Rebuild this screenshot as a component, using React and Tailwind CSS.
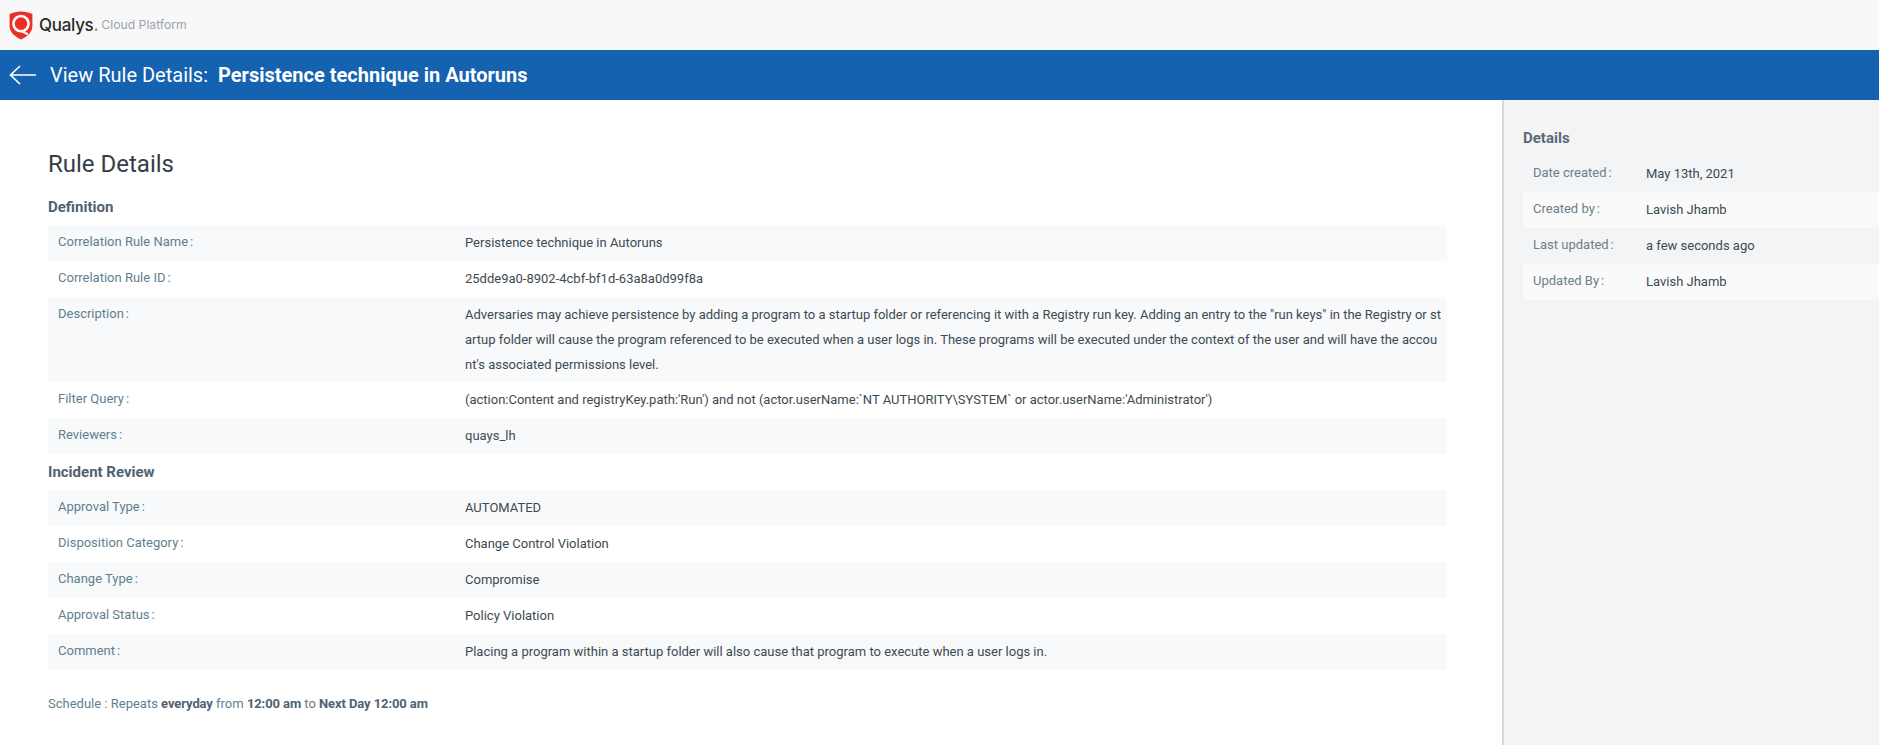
import React from "react";

const definition = [
  ["Correlation Rule Name", "Persistence technique in Autoruns"],
  ["Correlation Rule ID", "25dde9a0-8902-4cbf-bf1d-63a8a0d99f8a"],
  ["Description", "Adversaries may achieve persistence by adding a program to a startup folder or referencing it with a Registry run key. Adding an entry to the \"run keys\" in the Registry or startup folder will cause the program referenced to be executed when a user logs in. These programs will be executed under the context of the user and will have the account's associated permissions level."],
  ["Filter Query", "(action:Content and registryKey.path:'Run') and not (actor.userName:`NT AUTHORITY\\SYSTEM` or actor.userName:'Administrator')"],
  ["Reviewers", "quays_lh"],
];

const review = [
  ["Approval Type", "AUTOMATED"],
  ["Disposition Category", "Change Control Violation"],
  ["Change Type", "Compromise"],
  ["Approval Status", "Policy Violation"],
  ["Comment", "Placing a program within a startup folder will also cause that program to execute when a user logs in."],
];

const details = [
  ["Date created", "May 13th, 2021"],
  ["Created by", "Lavish Jhamb"],
  ["Last updated", "a few seconds ago"],
  ["Updated By", "Lavish Jhamb"],
];

function Logo() {
  return (
    <svg width="24" height="29" viewBox="0 0 24 29" aria-hidden="true">
      <path d="M12 0.5C8 0.5 4 1.4 0.6 3V15C0.6 21 5.5 25.5 12 28.5C18.5 25.5 23.4 21 23.4 15V3C20 1.4 16 0.5 12 0.5Z" fill="#ed2e26" />
      <circle cx="12" cy="12.6" r="7.6" fill="none" stroke="#fff" strokeWidth="2.6" />
      <circle cx="12" cy="12.6" r="3.6" fill="#ed2e26" />
      <path d="M12.5 20L18.8 23.2" stroke="#fff" strokeWidth="2.4" />
    </svg>
  );
}

function Row({ label, value }) {
  return (
    <div className="flex min-h-[36px] py-[5px] pl-[10px] odd:bg-[#f8f9fb]">
      <div className="w-[407px] shrink-0 leading-[23px] text-[#5f7f8f]">{label}<span className="ml-[2px]">:</span></div>
      <div className="min-w-0 flex-1 break-all pr-[3px] leading-[25px] text-[#3d4a52]">{value}</div>
    </div>
  );
}

function SideRow({ label, value }) {
  return (
    <div className="flex h-[36px] items-center pl-[10px] odd:bg-[#f3f4f5] even:bg-[#fafafa]">
      <div className="w-[113px] shrink-0 -translate-y-px text-[#6b7f8c]">{label}<span className="ml-[2px]">:</span></div>
      <div className="text-[#3d4a52]">{value}</div>
    </div>
  );
}

export default function App() {
  return (
    <div className="flex h-[745px] flex-col overflow-hidden bg-white font-['Roboto',sans-serif] text-[13px]">
      <header className="flex h-[50px] shrink-0 items-center bg-[#f8f8f8] pl-[9px]">
        <Logo />
        <span className="ml-[6px] font-['Inter',sans-serif] text-[17px] font-medium leading-none tracking-[-0.3px] text-[#2b2b2b]">Qualys<span className="text-[#8a8f99]">.</span></span>
        <span className="ml-[3px] font-['Inter',sans-serif] text-[12.2px] leading-none text-[#9aa3b2]">Cloud Platform</span>
      </header>
      <div className="flex h-[50px] shrink-0 items-center bg-[#1562b0] pl-[9px] text-[20px] text-white">
        <svg width="27" height="22" viewBox="0 0 27 22" fill="none" stroke="#fff" strokeWidth="1.7" aria-hidden="true">
          <path d="M11 2L1.5 11L11 20M1.5 11H27" />
        </svg>
        <span className="ml-[14px]">View Rule Details:</span>
        <span className="ml-[10px] font-bold">Persistence technique in Autoruns</span>
      </div>
      <div className="flex min-h-0 flex-1">
        <main className="w-[1502px] shrink-0 pl-[48px] pr-[55px] pt-[50px]">
          <h1 className="text-[24px] leading-[28px] text-[#333e48]">Rule Details</h1>
          <h2 className="mt-[20px] mb-[9px] text-[15px] font-bold leading-[18px] text-[#4f6272]">Definition</h2>
          {definition.map(([label, value]) => <Row key={label} label={label} value={value} />)}
          <h2 className="mt-[9px] mb-[9px] text-[15px] font-bold leading-[18px] text-[#4f6272]">Incident Review</h2>
          {review.map(([label, value]) => <Row key={label} label={label} value={value} />)}
          <p className="mt-[24px] text-[#5f7f8f]">
            Schedule : Repeats <b className="tracking-[-0.1px] text-[#4f6272]">everyday</b> from <b className="tracking-[-0.1px] text-[#4f6272]">12:00 am</b> to <b className="tracking-[-0.1px] text-[#4f6272]">Next Day 12:00 am</b>
          </p>
        </main>
        <aside className="flex-1 border-l-2 border-[#d5d9dd] bg-[#f4f4f4] pl-[19px] pt-[29px]">
          <div>
            <h2 className="mb-[9px] text-[15px] font-bold leading-[18px] text-[#5a6a78]">Details</h2>
          </div>
          <div>
            {details.map(([label, value]) => <SideRow key={label} label={label} value={value} />)}
          </div>
        </aside>
      </div>
    </div>
  );
}
